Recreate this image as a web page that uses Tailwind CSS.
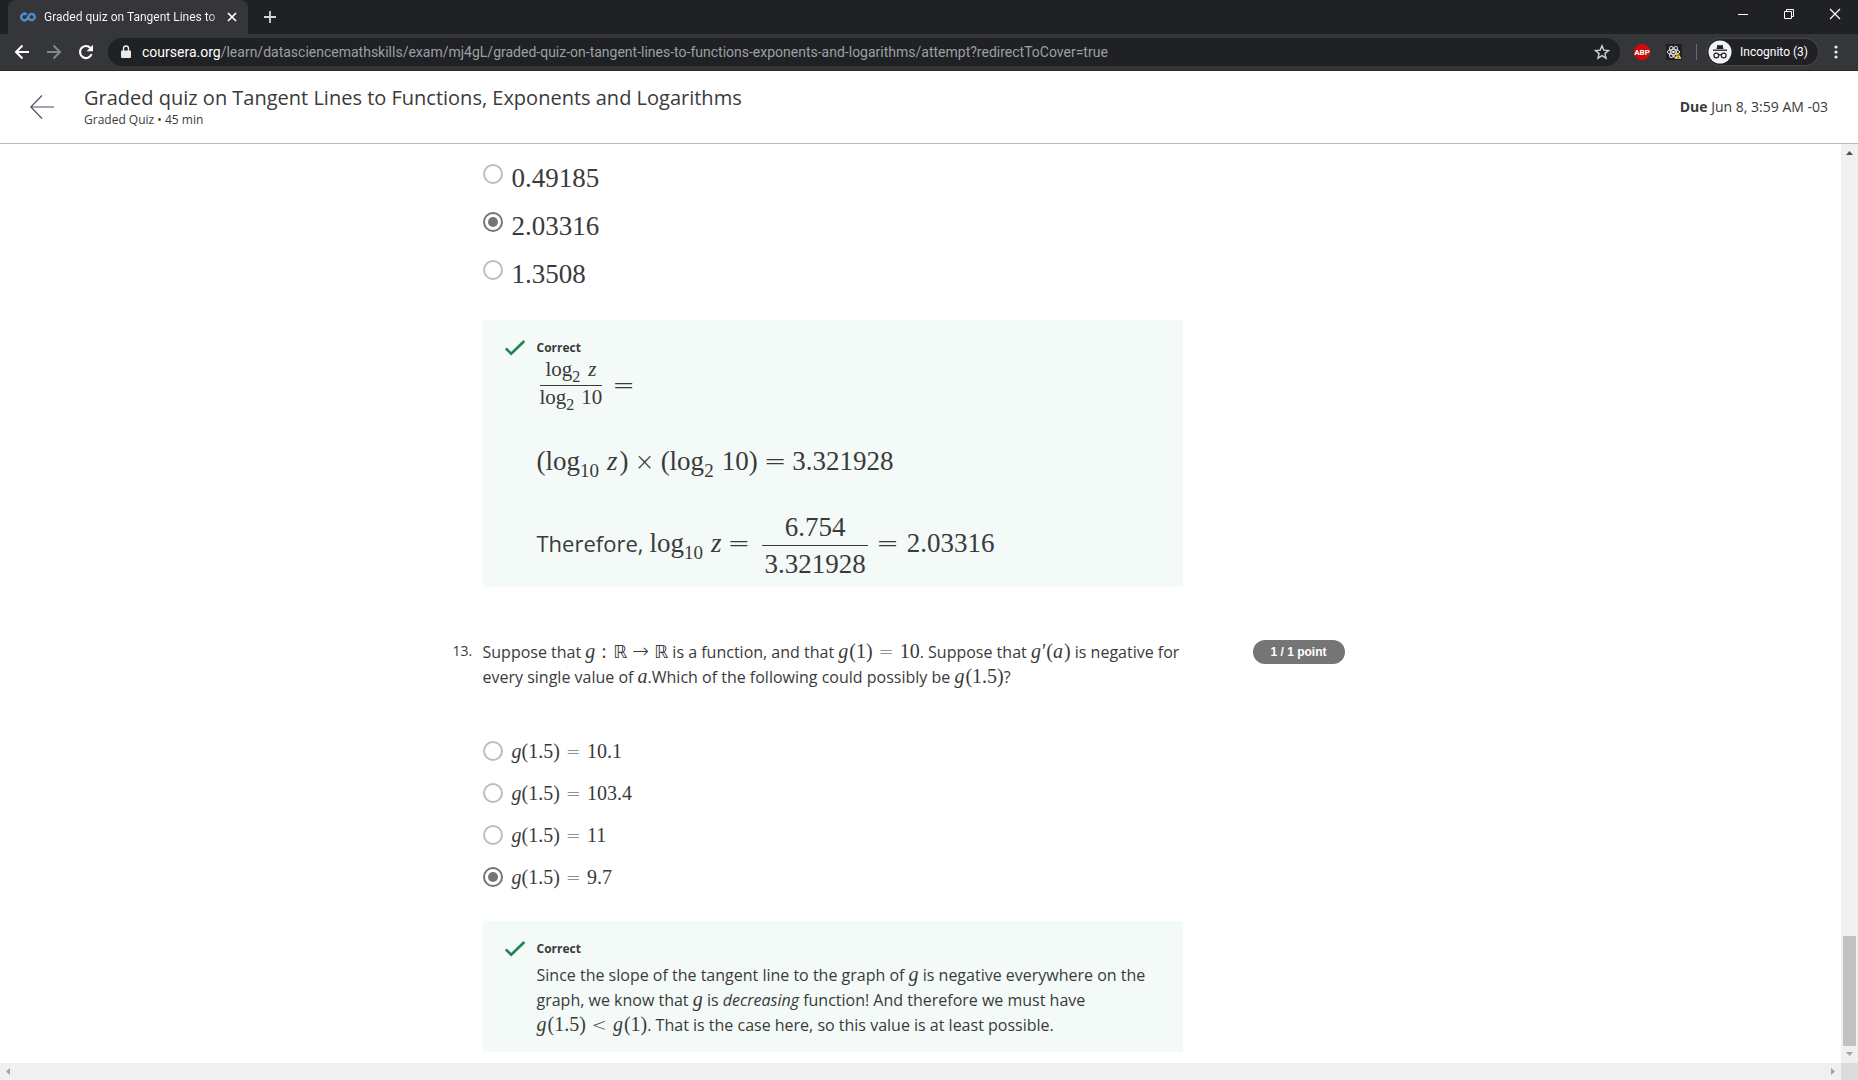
<!DOCTYPE html>
<html lang="en">
<head>
<meta charset="utf-8">
<title>Graded quiz on Tangent Lines to Functions, Exponents and Logarithms</title>
<script src="https://cdn.jsdelivr.net/npm/@tailwindcss/browser@4"></script>
</head>
<body class="flex h-screen flex-col overflow-hidden bg-white font-['Open_Sans',sans-serif] text-[#3a3a3a]">

<!-- Tab strip -->
<div class="flex h-[34px] shrink-0 items-stretch bg-[#202124] font-[Roboto,sans-serif] text-white">
  <div class="ml-2 flex w-60 items-center rounded-t-lg bg-[#35363a] pr-2 pl-3">
    <svg class="h-4 w-4 shrink-0" viewBox="0 0 16 16" fill="none" stroke="#4a90d0" stroke-width="2.4"><path d="M6.6 5.6A3.2 3.2 0 1 0 6.6 10.4C8 9.400 8.400 6.400 10.300 5.200A3.100 3.100 0 1 1 10 10.600C9.200 10.200 8.700 9.500 8.300 8.700"/></svg>
    <span class="ml-2 flex-1 bg-linear-to-r from-white from-90% to-[#77787b] bg-clip-text text-xs whitespace-nowrap text-transparent">Graded quiz on Tangent Lines to</span>
    <button class="flex h-4 w-4 items-center justify-center" aria-label="Close tab"><svg class="h-4 w-4" viewBox="0 0 16 16" stroke="#fff" stroke-width="1.700"><path d="M4 4l8 8M12 4l-8 8"/></svg></button>
  </div>
  <button class="ml-3.5 flex w-4 items-center" aria-label="New tab"><svg class="h-4 w-4" viewBox="0 0 16 16" stroke="#d5d7da" stroke-width="1.800"><path d="M8 2v12M2 8h12"/></svg></button>
  <div class="ml-auto flex h-7">
    <button class="flex w-[46px] items-center justify-center" aria-label="Minimize"><svg class="h-3 w-3" viewBox="0 0 12 12" stroke="#fff"><path d="M1 6.500h10"/></svg></button>
    <button class="flex w-[46px] items-center justify-center" aria-label="Restore"><svg class="h-3 w-3" viewBox="0 0 12 12" fill="none" stroke="#fff"><path d="M1.500 3.500h7v7h-7zM3.500 3.500v-2h7v7h-2"/></svg></button>
    <button class="flex w-[46px] items-center justify-center" aria-label="Close"><svg class="h-3 w-3" viewBox="0 0 12 12" stroke="#fff" stroke-width="1.200"><path d="M1 1l10 10M11 1L1 11"/></svg></button>
  </div>
</div>

<!-- Toolbar -->
<div class="flex h-[37px] shrink-0 items-center border-b border-[#28292c] bg-[#35363a] font-[Roboto,sans-serif]">
  <button class="ml-3.5 h-4 w-4" aria-label="Back"><svg class="h-4 w-4" viewBox="0 0 16 16" fill="none" stroke="#fff" stroke-width="2"><path d="M15 8H2M8.500 1.500L2 8l6.500 6.500"/></svg></button>
  <button class="ml-4 h-4 w-4" aria-label="Forward"><svg class="h-4 w-4" viewBox="0 0 16 16" fill="none" stroke="#85878a" stroke-width="2"><path d="M1 8h13M7.500 1.500L14 8l-6.500 6.500"/></svg></button>
  <button class="ml-4 h-4 w-4" aria-label="Reload"><svg class="h-4 w-4" viewBox="0 0 16 16"><path d="M13.600 10.200A6 6 0 1 1 12.400 3.900" fill="none" stroke="#fff" stroke-width="2.200"/><path d="M15 .8v6.400H8.600z" fill="#fff"/></svg></button>
  <div class="ml-3.5 flex h-7 flex-1 items-center rounded-full bg-[#202124] pr-2.5 pl-3">
    <svg class="h-4 w-3 shrink-0" viewBox="0 0 12 16"><path d="M2 6.500h8a1 1 0 0 1 1 1V13a1 1 0 0 1-1 1H2a1 1 0 0 1-1-1V7.500a1 1 0 0 1 1-1z" fill="#e8eaed"/><path d="M3.500 7V4.500a2.500 2.500 0 0 1 5 0V7" fill="none" stroke="#e8eaed" stroke-width="1.400"/></svg>
    <div class="ml-2.5 flex-1 overflow-hidden text-sm leading-5 whitespace-nowrap text-[#9aa0a6]"><span class="text-white">coursera.org</span>/learn/datasciencemathskills/exam/mj4gL/graded-quiz-on-tangent-lines-to-functions-exponents-and-logarithms/attempt?redirectToCover=true</div>
    <button class="h-4 w-4" aria-label="Bookmark"><svg class="h-4 w-4" viewBox="0 0 16 16" fill="none" stroke="#d0d2d5" stroke-width="1.400"><path d="M8 1.800l1.800 4.300 4.700.4-3.600 3.100 1.100 4.600L8 11.700l-4 2.500 1.100-4.600L1.500 6.500l4.700-.4z"/></svg></button>
  </div>
  <button class="ml-3.5 h-4 w-4" aria-label="Adblock Plus"><svg class="h-4 w-4" viewBox="0 0 16 16"><path d="M4.700 0h6.600L16 4.700v6.600L11.300 16H4.700L0 11.300V4.700z" fill="#cc0b0b"/><text x="8" y="11" font-size="8" font-weight="700" fill="#fff" text-anchor="middle" font-family="Roboto">ABP</text></svg></button>
  <button class="ml-4 h-4 w-4" aria-label="React Developer Tools"><svg class="h-4 w-4" viewBox="0 0 16 16"><path d="M0 0h16v16H0z" fill="#202020"/><g fill="none" stroke="#e4e4e4"><ellipse cx="7.500" cy="8" rx="6.200" ry="2.500"/><ellipse cx="7.500" cy="8" rx="6.200" ry="2.500" transform="rotate(60 7.500 8)"/><ellipse cx="7.500" cy="8" rx="6.200" ry="2.500" transform="rotate(120 7.500 8)"/></g><circle cx="7.500" cy="8" r="1.300" fill="#fff"/><path d="M12 8.500l3.500 6.200h-7z" fill="#f3e33c"/><path d="M12 10.500v2M12 13v1" stroke="#222"/></svg></button>
  <span class="ml-3.5 h-4 w-px bg-[#6a6b6f]"></span>
  <button class="ml-2.5 flex h-[26px] items-center rounded-full bg-[#202124] pr-2.5 pl-px text-xs whitespace-nowrap text-white ring-1 ring-[#45464a]">
    <svg class="mr-2 h-6 w-6" viewBox="0 0 24 24"><circle cx="12" cy="12" r="11.500" fill="#f1f3f4"/><path d="M8.500 9l1-4.200 1.500.4q1 .3 2 0l1.500-.4 1 4.200z" fill="#202124"/><path d="M5 10.200h14" stroke="#202124" stroke-width="1.300"/><g fill="none" stroke="#202124" stroke-width="1.200"><circle cx="8.300" cy="15.500" r="2.400"/><circle cx="15.700" cy="15.500" r="2.400"/><path d="M10.700 15q1.300-.8 2.600 0"/></g></svg>Incognito (3)
  </button>
  <button class="mr-3.5 ml-2.5 h-4 w-4" aria-label="Menu"><svg class="h-4 w-4" viewBox="0 0 16 16" fill="#e8eaed"><circle cx="8" cy="3" r="1.600"/><circle cx="8" cy="8" r="1.600"/><circle cx="8" cy="13" r="1.600"/></svg></button>
</div>

<!-- Quiz header -->
<header class="flex h-[73px] shrink-0 items-center border-b border-[#bbb] pr-[30px] pl-[30px]">
  <a href="#" aria-label="Back"><svg class="h-6 w-6" viewBox="0 0 24 24" fill="none" stroke="#4a4a5a" stroke-width="1.100"><path d="M24 12H1M12 .5L.8 12 12 23.500"/></svg></a>
  <div class="ml-[30px]">
    <h1 class="text-xl leading-[26px]">Graded quiz on Tangent Lines to Functions, Exponents and Logarithms</h1>
    <p class="text-xs leading-[18px]">Graded Quiz • 45 min</p>
  </div>
  <p class="ml-auto text-sm"><b>Due</b> Jun 8, 3:59 AM -03</p>
</header>

<div class="flex min-h-0 flex-1">
  <main class="min-w-0 flex-1 overflow-hidden">
    <div class="mx-auto max-w-[936px] pl-[30px] whitespace-nowrap">

      <!-- Question 12 options -->
      <fieldset class="w-[700px] pt-3 font-['Liberation_Serif',serif] text-[27px]">
        <label class="flex h-12 items-start gap-[9px] pt-2"><input type="radio" name="q12" class="h-5 w-5 appearance-none rounded-full border-2 border-[#bdbdbd] bg-clip-content p-[3px] checked:border-[#757575] checked:bg-[#757575]"><span class="leading-7">0.49185</span></label>
        <label class="flex h-12 items-start gap-[9px] pt-2"><input type="radio" name="q12" checked class="h-5 w-5 appearance-none rounded-full border-2 border-[#bdbdbd] bg-clip-content p-[3px] checked:border-[#757575] checked:bg-[#757575]"><span class="leading-7">2.03316</span></label>
        <label class="flex h-12 items-start gap-[9px] pt-2"><input type="radio" name="q12" class="h-5 w-5 appearance-none rounded-full border-2 border-[#bdbdbd] bg-clip-content p-[3px] checked:border-[#757575] checked:bg-[#757575]"><span class="leading-7">1.3508</span></label>
      </fieldset>

      <section class="mt-5 flex h-[267px] w-[700px] items-start bg-[#f3faf8] pt-5 pl-[22px]">
        <svg class="h-4 w-5" viewBox="0 0 20 16" fill="none" stroke="#1f8354" stroke-width="2.600"><path d="M.8 8.500l5.400 5.200L19.300 1"/></svg>
        <div class="ml-3">
          <h2 class="text-xs leading-4 font-bold">Correct</h2>
          <div class="flex items-center font-['Liberation_Serif',serif] text-[27px] leading-none">
            <span class="ml-[3px] text-center text-[21px]">
              <span class="block border-b border-[#3a3a3a] leading-[26px]">log<sub class="static align-[-6px] text-base leading-none">2</sub><i class="ml-2">z</i></span>
              <span class="block leading-[22px]">log<sub class="static align-[-6px] text-base leading-none">2</sub><span class="ml-[7px]">10</span></span>
            </span>
            <span class="ml-2.5 font-['DejaVu_Sans',sans-serif] font-extralight">=</span>
          </div>
          <div class="mt-7 h-12 font-['Liberation_Serif',serif] text-[27px] leading-10">(log<sub class="static align-[-7px] text-[19px] leading-none">10</sub><i class="mr-0.5 ml-2">z</i>)<span class="mx-1.5 font-['DejaVu_Sans',sans-serif] text-2xl leading-none font-extralight">×</span>(log<sub class="static align-[-7px] text-[19px] leading-none">2</sub><span class="ml-2">10)</span><span class="mx-1.5 font-['DejaVu_Sans',sans-serif] leading-none font-extralight">=</span>3.321928</div>
          <div class="mt-5 flex items-center text-[22px]">
            <span class="pb-1.5 leading-10">Therefore,<span class="ml-1.5 font-['Liberation_Serif',serif] text-[27px]">log<sub class="static align-[-7px] text-[19px] leading-none">10</sub><i class="ml-2">z</i></span><span class="ml-1.5 font-['DejaVu_Sans',sans-serif] text-[27px] leading-none font-extralight">=</span></span>
            <span class="ml-3 flex w-[106px] flex-col text-center font-['Liberation_Serif',serif] text-[27px]"><span class="border-b border-[#3a3a3a] leading-9">6.754</span><span class="leading-9">3.321928</span></span>
            <span class="ml-2 pb-1 font-['Liberation_Serif',serif] text-[27px]"><span class="mr-2 font-['DejaVu_Sans',sans-serif] leading-none font-extralight">=</span>2.03316</span>
          </div>
        </div>
      </section>

      <!-- Question 13 -->
      <section class="mt-[53px] -ml-[30px] flex items-start">
        <span class="w-[30px] text-sm leading-[22px]">13.</span>
        <p class="w-[700px] text-base leading-[25px]">Suppose that <i class="font-['Liberation_Serif',serif] text-xl leading-none">g</i><span class="mx-1.5 font-['Liberation_Serif',serif] text-xl leading-none">:</span><span class="font-['DejaVu_Sans',sans-serif] text-lg leading-none">ℝ</span><span class="mx-[5px] font-['DejaVu_Sans',sans-serif] text-xl leading-none font-extralight">→</span><span class="font-['DejaVu_Sans',sans-serif] text-lg leading-none">ℝ</span> is a function, and that <span class="font-['Liberation_Serif',serif] text-xl leading-none"><i class="mr-px">g</i>(1)</span><span class="mx-1.5 font-['DejaVu_Sans',sans-serif] text-lg leading-none font-extralight">=</span><span class="font-['Liberation_Serif',serif] text-xl leading-none">10</span>. Suppose that <span class="font-['Liberation_Serif',serif] text-xl leading-none"><i class="mr-px">g</i>′(<i class="mr-px">a</i>)</span> is negative for<br>every single value of <i class="font-['Liberation_Serif',serif] text-xl leading-none">a</i>.Which of the following could possibly be <span class="font-['Liberation_Serif',serif] text-xl leading-none"><i class="mr-px">g</i>(1.5)</span>?</p>
        <span class="ml-[70px] h-6 w-[92px] rounded-full bg-[#757575] text-center font-['Liberation_Sans',sans-serif] text-xs leading-6 font-bold text-white">1 / 1 point</span>
      </section>

      <fieldset class="mt-10 w-[700px] font-['Liberation_Serif',serif] text-xl">
        <label class="flex h-[42px] items-center gap-[9px]"><input type="radio" name="q13" class="h-5 w-5 appearance-none rounded-full border-2 border-[#bdbdbd] bg-clip-content p-[3px] checked:border-[#757575] checked:bg-[#757575]"><span><i>g</i>(1.5)<span class="mx-1.5 font-['DejaVu_Sans',sans-serif] text-lg leading-none font-extralight">=</span>10.1</span></label>
        <label class="flex h-[42px] items-center gap-[9px]"><input type="radio" name="q13" class="h-5 w-5 appearance-none rounded-full border-2 border-[#bdbdbd] bg-clip-content p-[3px] checked:border-[#757575] checked:bg-[#757575]"><span><i>g</i>(1.5)<span class="mx-1.5 font-['DejaVu_Sans',sans-serif] text-lg leading-none font-extralight">=</span>103.4</span></label>
        <label class="flex h-[42px] items-center gap-[9px]"><input type="radio" name="q13" class="h-5 w-5 appearance-none rounded-full border-2 border-[#bdbdbd] bg-clip-content p-[3px] checked:border-[#757575] checked:bg-[#757575]"><span><i>g</i>(1.5)<span class="mx-1.5 font-['DejaVu_Sans',sans-serif] text-lg leading-none font-extralight">=</span>11</span></label>
        <label class="flex h-[42px] items-center gap-[9px]"><input type="radio" name="q13" checked class="h-5 w-5 appearance-none rounded-full border-2 border-[#bdbdbd] bg-clip-content p-[3px] checked:border-[#757575] checked:bg-[#757575]"><span><i>g</i>(1.5)<span class="mx-1.5 font-['DejaVu_Sans',sans-serif] text-lg leading-none font-extralight">=</span>9.7</span></label>
      </fieldset>

      <section class="mt-[23px] flex h-[131px] w-[700px] items-start bg-[#f3faf8] pt-5 pl-[22px]">
        <svg class="h-4 w-5" viewBox="0 0 20 16" fill="none" stroke="#1f8354" stroke-width="2.600"><path d="M.8 8.500l5.400 5.200L19.300 1"/></svg>
        <div class="ml-3">
          <h2 class="text-xs leading-4 font-bold">Correct</h2>
          <p class="mt-1.5 text-base leading-[25px]">Since the slope of the tangent line to the graph of <i class="font-['Liberation_Serif',serif] text-xl leading-none">g</i> is negative everywhere on the<br>graph, we know that <i class="font-['Liberation_Serif',serif] text-xl leading-none">g</i> is <em>decreasing</em> function! And therefore we must have<br><span class="font-['Liberation_Serif',serif] text-xl leading-none"><i class="mr-px">g</i>(1.5)</span><span class="mx-1.5 font-['DejaVu_Sans',sans-serif] text-lg leading-none font-extralight">&lt;</span><span class="font-['Liberation_Serif',serif] text-xl leading-none"><i class="mr-px">g</i>(1)</span>. That is the case here, so this value is at least possible.</p>
        </div>
      </section>
    </div>
  </main>

  <!-- Vertical scrollbar -->
  <div class="flex w-[17px] flex-col items-center bg-[#f0f0f0]">
    <svg class="h-[17px] w-[17px]" viewBox="0 0 17 17" fill="#505050"><path d="M5 11h7L8.500 7z"/></svg>
    <span class="mt-auto h-[110px] w-[13px] bg-[#c1c1c1]"></span>
    <svg class="h-[17px] w-[17px]" viewBox="0 0 17 17" fill="#a3a3a3"><path d="M5 6h7l-3.500 4z"/></svg>
  </div>
</div>

<!-- Horizontal scrollbar -->
<div class="flex h-[17px] shrink-0 bg-[#f0f0f0]">
  <svg class="h-[17px] w-[17px]" viewBox="0 0 17 17" fill="#a3a3a3"><path d="M10 5v7L6 8.500z"/></svg>
  <svg class="ml-auto h-[17px] w-[17px]" viewBox="0 0 17 17" fill="#a3a3a3"><path d="M7 5v7l4-3.500z"/></svg>
  <span class="w-[17px] bg-[#dcdcdc]"></span>
</div>
</body>
</html>
